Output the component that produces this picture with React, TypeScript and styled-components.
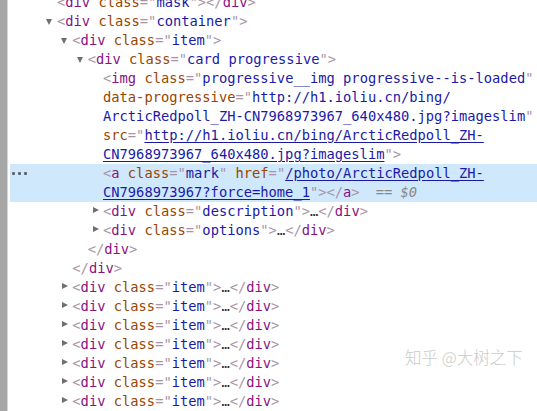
import React from "react";
import styled, { createGlobalStyle } from "styled-components";

const Global = createGlobalStyle`
  html, body { margin: 0; padding: 0; background: #ffffff; overflow: hidden; }
  body { width: 537px; height: 411px; }
`;

const Page = styled.div`
  position: relative;
  display: flex;
  width: 537px;
  height: 411px;
  overflow: hidden;
  background: #ffffff;
  font-family: "DejaVu Sans Mono", "Liberation Mono", monospace;
  font-size: 13.75px;
  line-height: 19px;
`;

const Gutter = styled.div`
  flex: 0 0 10px;
  background: linear-gradient(to right, #a7a7a7 0, #a7a7a7 7px, #d6d6d6 7px, #d6d6d6 8px, #ffffff 8px);
`;

const Tree = styled.div`
  flex: 1;
  display: flex;
  flex-direction: column;
  margin-top: -7px;
`;

const Row = styled.div<{ $level: number; $selected?: boolean }>`
  position: relative;
  display: block;
  height: 19px;
  flex: 0 0 19px;
  white-space: pre;
  padding-left: ${(p) => 35 + p.$level * 15.33}px;
  background: ${(p) => (p.$selected ? "#cfe8fc" : "transparent")};
`;

const Toggle = styled.span<{ $open?: boolean; $none?: boolean }>`
  display: inline-block;
  vertical-align: top;
  width: 12px;
  height: 19px;
  position: relative;
  &::before {
    content: "";
    display: ${(p) => (p.$none ? "none" : "block")};
    position: absolute;
    left: 1px;
    top: ${(p) => (p.$open ? "7px" : "5px")};
    width: 0;
    height: 0;
    ${(p) =>
      p.$open
        ? `border-left: 3.5px solid transparent; border-right: 3.5px solid transparent; border-top: 6px solid #6f6f6f;`
        : `border-top: 3.5px solid transparent; border-bottom: 3.5px solid transparent; border-left: 6px solid #6f6f6f; left: 2px;`}
  }
`;

const Punct = styled.span`
  color: #a894a6;
`;
const TagName = styled.span`
  color: #881280;
`;
const AttrName = styled.span`
  color: #994500;
`;
const AttrValue = styled.span`
  color: #1a1aa6;
`;
const Link = styled.span`
  color: #1a1aa6;
  text-decoration: underline;
  text-underline-offset: 2px;
`;
const Ellipsis = styled.span`
  color: #303030;
`;
const Dollar = styled.span`
  color: #888888;
  font-style: italic;
  margin-left: 16px;
`;

const Dots = styled.span`
  position: absolute;
  left: 2px;
  top: 0;
  height: 19px;
  display: flex;
  align-items: center;
  gap: 3px;
  & > i {
    display: block;
    width: 3px;
    height: 3px;
    border-radius: 1px;
    background: #5c6670;
  }
`;

const Watermark = styled.div`
  position: absolute;
  left: 405px;
  top: 346px;
  font-family: "Noto Sans CJK SC", "Noto Sans", sans-serif;
  font-size: 16.5px;
  font-weight: 300;
  line-height: 22px;
  color: #cbcbcb;
  white-space: pre;
  text-shadow: 0 0 1px #ffffff, 0 0 1px #ffffff;
`;

const Attr: React.FC<{ name: string; value?: string; link?: boolean }> = ({ name, value, link }) => (
  <>
    {" "}
    <AttrName>{name}</AttrName>
    <Punct>="</Punct>
    {link ? <Link>{value}</Link> : <AttrValue>{value}</AttrValue>}
    <Punct>"</Punct>
  </>
);

const OpenTag: React.FC<{ name: string; cls: string; collapsed?: boolean }> = ({ name, cls, collapsed }) => (
  <>
    <Punct>&lt;</Punct>
    <TagName>{name}</TagName>
    <Attr name="class" value={cls} />
    <Punct>&gt;</Punct>
    {collapsed && (
      <>
        <Ellipsis>…</Ellipsis>
        <Punct>&lt;/</Punct>
        <TagName>{name}</TagName>
        <Punct>&gt;</Punct>
      </>
    )}
  </>
);

const Close: React.FC<{ name: string }> = ({ name }) => (
  <>
    <Punct>&lt;/</Punct>
    <TagName>{name}</TagName>
    <Punct>&gt;</Punct>
  </>
);

export default function App() {
  const items = [0, 1, 2, 3, 4, 5, 6];
  return (
    <>
      <Global />
      <Page>
        <Gutter />
        <Tree>
          <Row $level={0}>
            <Toggle $none />
            <OpenTag name="div" cls="mask" />
            <Close name="div" />
          </Row>
          <Row $level={0}>
            <Toggle $open />
            <OpenTag name="div" cls="container" />
          </Row>
          <Row $level={1}>
            <Toggle $open />
            <OpenTag name="div" cls="item" />
          </Row>
          <Row $level={2}>
            <Toggle $open />
            <OpenTag name="div" cls="card progressive" />
          </Row>
          <Row $level={3}>
            <Toggle $none />
            <Punct>&lt;</Punct>
            <TagName>img</TagName>
            <Attr name="class" value="progressive__img progressive--is-loaded" />
          </Row>
          <Row $level={3}>
            <Toggle $none />
            <AttrName>data-progressive</AttrName>
            <Punct>="</Punct>
            <AttrValue>http://h1.ioliu.cn/bing/</AttrValue>
          </Row>
          <Row $level={3}>
            <Toggle $none />
            <AttrValue>ArcticRedpoll_ZH-CN7968973967_640x480.jpg?imageslim</AttrValue>
            <Punct>"</Punct>
          </Row>
          <Row $level={3}>
            <Toggle $none />
            <AttrName>src</AttrName>
            <Punct>="</Punct>
            <Link>http://h1.ioliu.cn/bing/ArcticRedpoll_ZH-</Link>
          </Row>
          <Row $level={3}>
            <Toggle $none />
            <Link>CN7968973967_640x480.jpg?imageslim</Link>
            <Punct>"&gt;</Punct>
          </Row>
          <Row $level={3} $selected>
            <Dots>
              <i />
              <i />
              <i />
            </Dots>
            <Toggle $none />
            <Punct>&lt;</Punct>
            <TagName>a</TagName>
            <Attr name="class" value="mark" />
            {" "}
            <AttrName>href</AttrName>
            <Punct>="</Punct>
            <Link>/photo/ArcticRedpoll_ZH-</Link>
          </Row>
          <Row $level={3} $selected>
            <Toggle $none />
            <Link>CN7968973967?force=home_1</Link>
            <Punct>"&gt;</Punct>
            <Close name="a" />
            <Dollar>== $0</Dollar>
          </Row>
          <Row $level={3}>
            <Toggle />
            <OpenTag name="div" cls="description" collapsed />
          </Row>
          <Row $level={3}>
            <Toggle />
            <OpenTag name="div" cls="options" collapsed />
          </Row>
          <Row $level={2}>
            <Toggle $none />
            <Close name="div" />
          </Row>
          <Row $level={1}>
            <Toggle $none />
            <Close name="div" />
          </Row>
          {items.map((i) => (
            <Row key={i} $level={1}>
              <Toggle />
              <OpenTag name="div" cls="item" collapsed />
            </Row>
          ))}
        </Tree>
        <Watermark>知乎 @大树之下</Watermark>
      </Page>
    </>
  );
}
